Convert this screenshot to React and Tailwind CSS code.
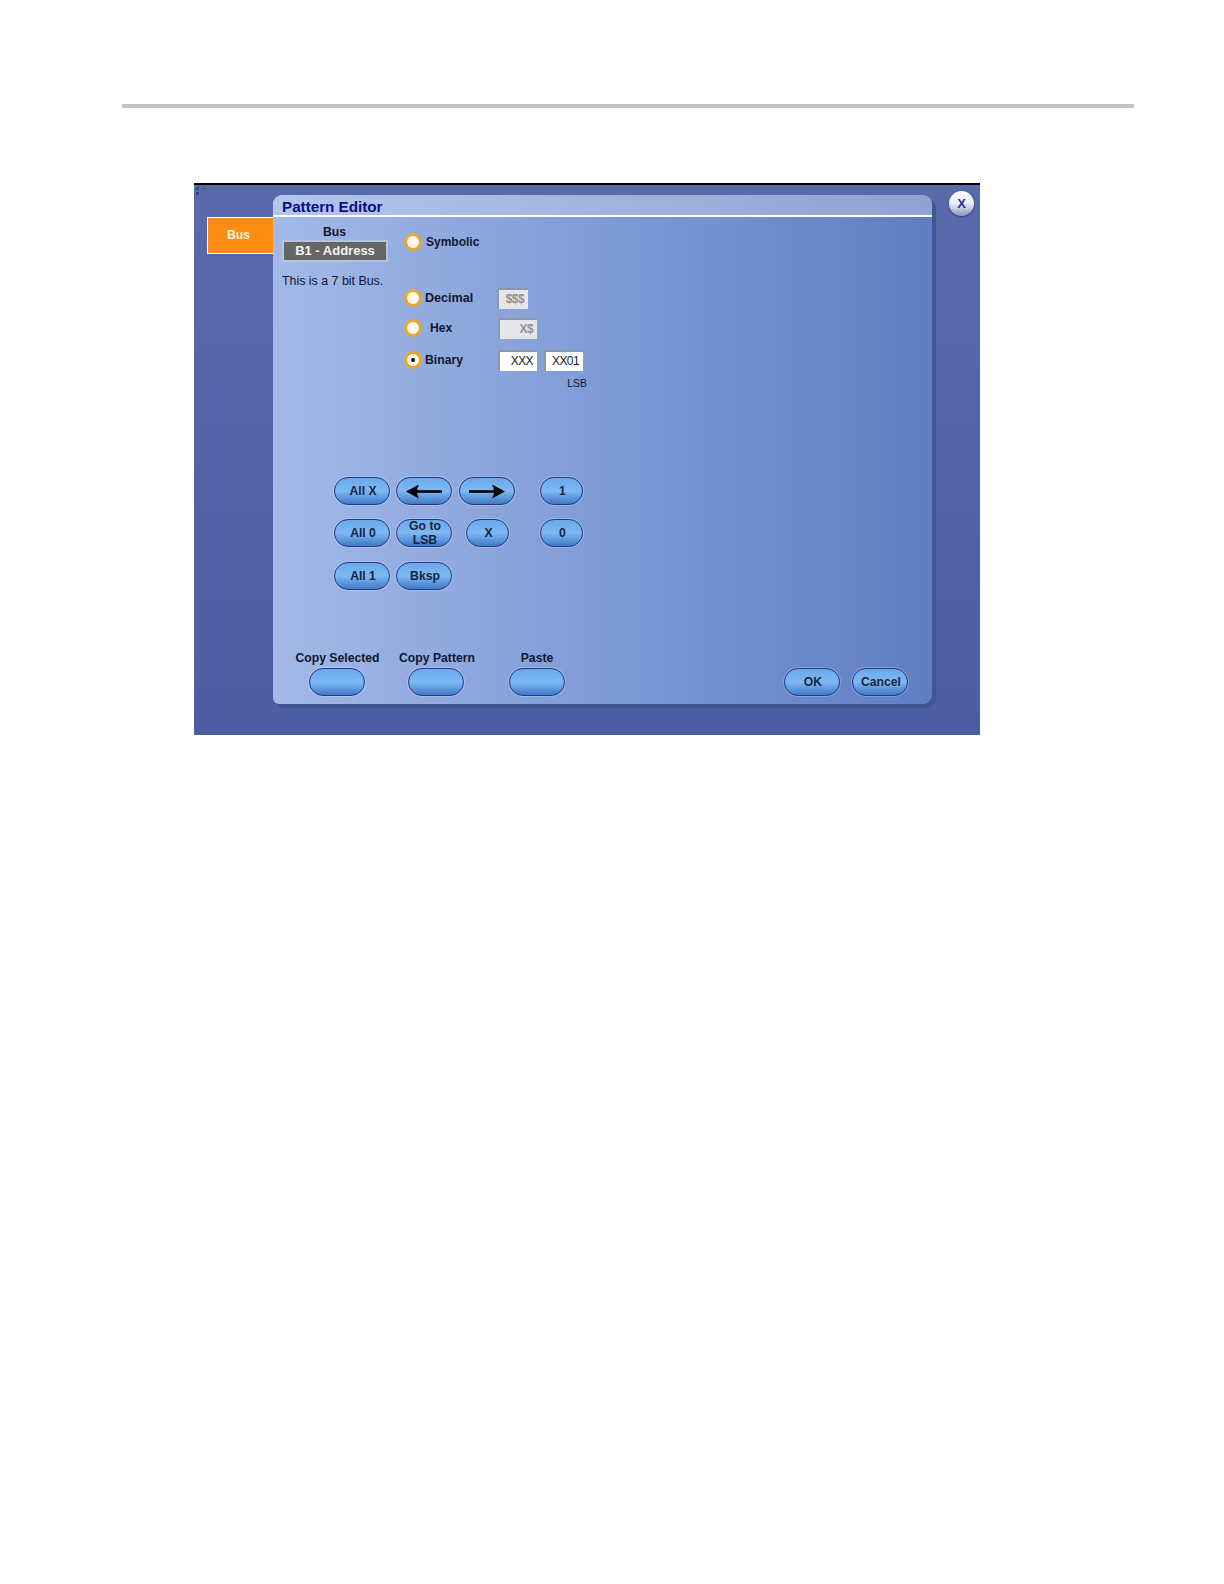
const Pill = ({ className = "w-[56px]", children }) => (
  <button className={`h-[28px] pl-[2px] rounded-full border-[1.5px] border-[#1f3a8e] bg-gradient-to-b from-[#6aa8ea] via-[#7db9f4] to-[#4178c6] shadow-[0_0_0_1px_rgba(255,255,255,0.22)] text-[12.2px] font-bold leading-[14px] text-[#16243f] flex items-center justify-center shrink-0 ${className}`}>
    {children}
  </button>
);

const Radio = ({ checked }) => (
  <span className="w-[18px] h-[18px] rounded-full bg-[#fdfcf6] border-[3px] border-[#eda52c] flex items-center justify-center shrink-0">
    {checked && <span className="w-[4px] h-[4px] rounded-full bg-black" />}
  </span>
);

const Field = ({ className, disabled, children }) => (
  <div className={`h-[21px] border-t-2 border-l-2 border-[#8f96a8] text-right pr-[4px] text-[12px] leading-[19px] tracking-[-0.6px] ${disabled ? "bg-[#e4e6ec] text-[#8f8f8f]" : "bg-white text-[#222]"} ${className}`}>
    {children}
  </div>
);

const Arrow = ({ flip }) => (
  <svg width="36" height="15" viewBox="0 0 36 15" className={flip ? "-scale-x-100" : ""}>
    <path d="M8 7.5H36" stroke="#000" strokeWidth="2.6" />
    <path d="M0 7.5L13 0.5Q9 7.5 13 14.5Z" fill="#000" />
  </svg>
);

export default function App() {
  return (
    <div className="w-[1224px] h-[1584px] bg-white pt-[104px] font-['Liberation_Sans',Arial,sans-serif]">
      <div className="ml-[122px] w-[1012px] h-[4px] bg-[#c2c2c2]" />

      <div className="relative ml-[194px] mt-[75px] w-[786px] h-[552px] border-t-2 border-black bg-gradient-to-b from-[#5a69aa] via-[#5263a8] to-[#4d5da2] flex items-start">
        {/* grip dots */}
        <svg width="12" height="10" viewBox="0 0 12 10" className="absolute left-[1px] top-[1px]">
          <path d="M1 1h3v3H1zM1 6h3v3H1zM8 2h3v1H8z" fill="#2f3c78" opacity="0.7" />
        </svg>

        {/* left tab */}
        <div className="ml-[13px] mt-[32px] w-[66px] h-[37px] bg-[#fb8c14] border border-r-0 border-white text-[#fff3e0] text-[12.2px] font-bold flex items-center justify-center pr-[4px] shrink-0">
          Bus
        </div>

        {/* dialog */}
        <div className="mt-[10px] w-[659px] h-[509px] rounded-t-[9px] rounded-bl-[6px] rounded-br-[9px] shadow-[4px_4px_0_#3f5592] bg-gradient-to-r from-[#a3b9e8] via-[#7f9bd6] to-[#5f7dc2] flex flex-col shrink-0">
          <div className="h-[22px] rounded-t-[9px] border-b-2 border-white bg-gradient-to-r from-[#b3c6ec] to-[#8fa3d2] pl-[9px] text-[15.2px] font-bold leading-[23px] text-[#0c0c86] shrink-0">
            Pattern Editor
          </div>

          <div className="flex pl-[9px] pt-[8px] h-[260px] shrink-0">
            <div className="w-[122px] shrink-0">
              <div className="w-[105px] text-center text-[12.2px] font-bold leading-[14px] text-[#10182f]">Bus</div>
              <div className="w-[106px] h-[22px] mt-[1px] bg-[#666] border-2 border-[#b6c4e4] text-[#f4f4f4] text-[13px] font-bold leading-[18px] text-center">
                B1 - Address
              </div>
              <div className="mt-[12px] text-[12.4px] leading-[14px] text-[#10182f] whitespace-nowrap">This is a 7 bit Bus.</div>
            </div>

            <div className="text-[12.2px] font-bold text-[#10182f]">
              <div className="flex items-center h-[18px] mt-[8px]">
                <Radio />
                <span className="ml-[4px] text-[12px]">Symbolic</span>
              </div>
              <div className="flex items-center h-[22px] mt-[36px]">
                <Radio />
                <span className="ml-[3px] w-[72px] text-[12.6px]">Decimal</span>
                <Field disabled className="w-[31px]">$$$</Field>
              </div>
              <div className="flex items-center h-[22px] mt-[8px]">
                <Radio />
                <span className="ml-[8px] w-[68px]">Hex</span>
                <Field disabled className="w-[39px]">X$</Field>
              </div>
              <div className="flex items-center h-[22px] mt-[10px]">
                <Radio checked />
                <span className="ml-[3px] w-[73px]">Binary</span>
                <Field className="w-[39px] font-normal">XXX</Field>
                <Field className="w-[39px] ml-[7px] font-normal">XX01</Field>
              </div>
              <div className="mt-[6px] text-right text-[10.5px] font-normal leading-[13px] -mr-[4px]">LSB</div>
            </div>
          </div>

          {/* keypad */}
          <div className="pl-[61px] flex flex-col gap-[14px] shrink-0">
            <div className="flex items-center">
              <Pill>All X</Pill>
              <Pill className="w-[56px] ml-[6px] !pl-0"><Arrow /></Pill>
              <Pill className="w-[56px] ml-[7px] !pl-0"><Arrow flip /></Pill>
              <Pill className="w-[43px] ml-[25px]">1</Pill>
            </div>
            <div className="flex items-center">
              <Pill>All 0</Pill>
              <Pill className="w-[56px] ml-[6px]">Go to<br />LSB</Pill>
              <Pill className="w-[43px] ml-[14px]">X</Pill>
              <Pill className="w-[43px] ml-[31px]">0</Pill>
            </div>
            <div className="flex items-center mt-[1px]">
              <Pill>All 1</Pill>
              <Pill className="w-[56px] ml-[6px]">Bksp</Pill>
            </div>
          </div>

          {/* bottom actions */}
          <div className="mt-[61px] pl-[22px] flex items-end shrink-0">
            <div className="w-[85px] flex flex-col items-center shrink-0">
              <span className="text-[12.2px] font-bold leading-[14px] text-[#10182f] whitespace-nowrap mb-[3px]">Copy Selected</span>
              <Pill className="w-[56px] -ml-[2px]" />
            </div>
            <div className="w-[76px] ml-[19px] flex flex-col items-center shrink-0">
              <span className="text-[12.2px] font-bold leading-[14px] text-[#10182f] whitespace-nowrap mb-[3px]">Copy Pattern</span>
              <Pill className="w-[56px] -ml-[2px]" />
            </div>
            <div className="w-[56px] ml-[34px] flex flex-col items-center shrink-0">
              <span className="text-[12.2px] font-bold leading-[14px] text-[#10182f] mb-[3px]">Paste</span>
              <Pill className="w-[56px]" />
            </div>
            <Pill className="w-[56px] ml-[219px]">OK</Pill>
            <Pill className="w-[56px] ml-[12px]">Cancel</Pill>
          </div>
        </div>

        {/* close */}
        <button className="absolute left-[755px] top-[6px] w-[25px] h-[25px] rounded-full bg-gradient-to-b from-white via-[#e8ecf6] to-[#8c96b8] shadow-[0_1px_2px_#2d3a70] text-[#2b2f9a] text-[13px] font-bold flex items-center justify-center">
          X
        </button>
      </div>
    </div>
  );
}
